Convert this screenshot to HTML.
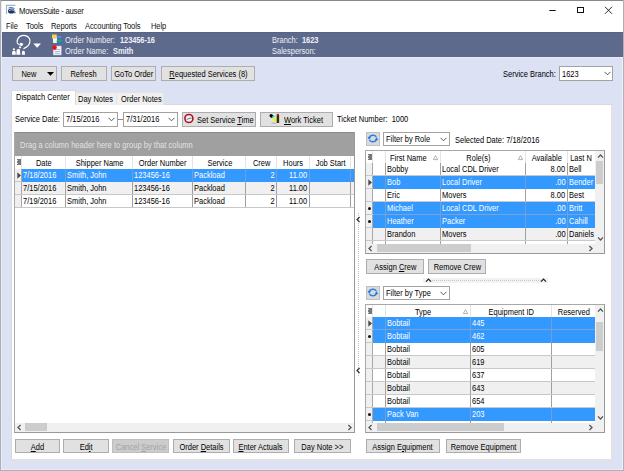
<!DOCTYPE html><html><head><meta charset='utf-8'><style>
*{margin:0;padding:0;box-sizing:border-box}
html,body{width:624px;height:471px;overflow:hidden;background:#fff}
body{position:relative;font-family:"Liberation Sans",sans-serif;font-size:8.3px;letter-spacing:0.01px;color:#000}
div{position:absolute}
.t{white-space:nowrap;line-height:0;height:0}
.t span{position:relative;top:-0.3465em;display:inline-block;line-height:0;transform:scaleX(0.9);transform-origin:0 0}
.t.c span{transform-origin:50% 0}
.t.r span{transform-origin:100% 0}
.btn span{display:inline-block;transform:scaleX(0.9);transform-origin:50% 50%}
.btn[style*="text-align:left"] span{transform-origin:0 50%}
.btn{background:#e1e1e1;border:1px solid #adadad;text-align:center;white-space:nowrap;color:#000}
.dis{background:#cccccc;border-color:#bfbfbf;color:#a3a3a3}
u{text-decoration:underline;text-underline-offset:1px}
</style></head><body><div style="left:0px;top:0px;width:624px;height:471px;background:#dde1f4"></div>
<div style="left:0px;top:0px;width:624px;height:32px;background:#fff"></div>
<div style="left:2px;top:32px;width:621px;height:25px;background:#5e6a8b"></div>
<div style="left:2px;top:32px;width:621px;height:1px;background:#56628a"></div>
<div style="left:2px;top:57px;width:621px;height:1px;background:#e9ecf8"></div>
<div style="left:1px;top:1px;width:1px;height:469px;background:#e8ecfa"></div>
<div style="left:1px;top:469px;width:622px;height:1px;background:#e8ecfa"></div>
<div style="left:622px;top:57px;width:1px;height:413px;background:#eef0fa"></div>
<div style="left:0px;top:0px;width:624px;height:1px;background:#8a8a8a"></div>
<div style="left:0px;top:0px;width:1px;height:471px;background:#b0b0b0"></div>
<div style="left:623px;top:0px;width:1px;height:471px;background:#b0b0b0"></div>
<div style="left:0px;top:470px;width:624px;height:1px;background:#b0b0b0"></div>
<div class="t" style="left:19px;top:14px;font-size:8.6px;letter-spacing:-0.27px;color:#111"><span>MoversSuite - auser</span></div>
<svg style="position:absolute;left:5px;top:4px" width="12" height="11" viewBox="0 0 12 11"><path d="M1.5 10 V1.3 H10.5" fill="none" stroke="#9fb2cc" stroke-width="1.2"/><path d="M3.5 4 Q6 2.5 9.5 4.5" fill="none" stroke="#4d6c9c" stroke-width="1"/><ellipse cx="6.3" cy="7" rx="3.3" ry="2.6" fill="#17336b"/><path d="M4 6.5 Q6.5 5 9.5 6.5" fill="none" stroke="#e8eef8" stroke-width="0.8"/><circle cx="9.8" cy="8.6" r="1" fill="#6b86b5"/></svg>
<svg style="position:absolute;left:545px;top:4px" width="72" height="14" viewBox="0 0 72 14"><path d="M4.3 6.5 H10.7" stroke="#111" stroke-width="1"/><rect x="32.5" y="3.5" width="6" height="5" fill="none" stroke="#111" stroke-width="1"/><path d="M60 2.8 L67 9.8 M67 2.8 L60 9.8" stroke="#111" stroke-width="0.9"/></svg>
<div class="t" style="left:6px;top:28.5px;font-size:8.4px;letter-spacing:-0.1px;color:#111"><span>File</span></div>
<div class="t" style="left:25.5px;top:28.5px;font-size:8.4px;letter-spacing:-0.1px;color:#111"><span>Tools</span></div>
<div class="t" style="left:51px;top:28.5px;font-size:8.4px;letter-spacing:-0.1px;color:#111"><span>Reports</span></div>
<div class="t" style="left:84.5px;top:28.5px;font-size:8.4px;letter-spacing:-0.1px;color:#111"><span>Accounting Tools</span></div>
<div class="t" style="left:150.5px;top:28.5px;font-size:8.4px;letter-spacing:-0.1px;color:#111"><span>Help</span></div>
<svg style="position:absolute;left:8px;top:32px" width="36" height="25" viewBox="0 0 36 25"><path d="M9.1 10.6 C9.1 8 10.5 5 13 3.9 C15.5 3 19.5 3.3 21.4 6.5 C22.8 9 21.5 13 19.2 14.6 C18 15.5 16.5 16.3 15.4 16.8" fill="none" stroke="#fff" stroke-width="1.25"/><path d="M9.1 10.6 C9.8 12.2 11 13 14.2 13.6" fill="none" stroke="#fff" stroke-width="1.1"/><ellipse cx="13.5" cy="12" rx="1.8" ry="1.1" transform="rotate(20 13.5 12)" fill="#fff"/><circle cx="5.9" cy="17.3" r="1.1" fill="#fff"/><path d="M4 22.8 L4.2 19.5 Q5.8 18 7.6 19.5 L7.8 22.8 Z" fill="#fff"/><circle cx="12" cy="15.3" r="1.1" fill="#fff"/><path d="M8.3 22.8 L8.6 18 Q10.2 16.3 12 17.5 L12.3 22.8 Z" fill="#fff"/><path d="M13.8 22.8 L14 19.6 Q15.4 18 16.8 19.6 L17 22.8 Z" fill="#fff"/><path d="M25.3 11.6 L33 11.6 L29.15 15.7 Z" fill="#fff"/></svg>
<svg style="position:absolute;left:51px;top:33px" width="13" height="23" viewBox="0 0 13 23"><rect x="2" y="4.5" width="4" height="5.5" fill="#f4f4f4"/><rect x="1" y="1.5" width="4.8" height="4" fill="#f0d060"/><rect x="6" y="3" width="4.5" height="2.2" fill="#5585e0"/><circle cx="8.6" cy="8.4" r="2.9" fill="#2a7acc"/><path d="M6.2 7.2 Q8.5 5.6 11 7.5 Q9 9.5 6.5 9Z" fill="#30b040"/><rect x="2.2" y="13" width="8" height="9" fill="#f4f4fa" stroke="#b8bcd0" stroke-width="0.5"/><path d="M4 16.5 H9 M4 18.5 H9 M4 20.3 H9" stroke="#8aa0d8" stroke-width="0.7"/><circle cx="3.5" cy="14.6" r="2.3" fill="#f01010"/></svg>
<div class="t" style="left:65px;top:42.8px;color:#eef0f8"><span>Order Number:</span></div>
<div class="t" style="left:119.5px;top:42.8px;color:#eef0f8;letter-spacing:-0.1px"><span><b>123456-16</b></span></div>
<div class="t" style="left:65px;top:54px;color:#eef0f8"><span>Order Name:</span></div>
<div class="t" style="left:112.5px;top:54px;color:#eef0f8;letter-spacing:-0.1px"><span><b>Smith</b></span></div>
<div class="t" style="left:272px;top:42.8px;color:#eef0f8"><span>Branch:</span></div>
<div class="t" style="left:301.5px;top:42.8px;color:#eef0f8;letter-spacing:-0.1px"><span><b>1623</b></span></div>
<div class="t" style="left:272px;top:54px;color:#eef0f8"><span>Salesperson:</span></div>
<div class="btn" style="left:12px;top:66px;width:45px;height:15px;line-height:15.6px;"><span>New&nbsp;&nbsp;&nbsp;&nbsp;&nbsp;</span></div>
<svg style="position:absolute;left:47px;top:72px" width="8" height="4" viewBox="0 0 8 4"><path d="M0 0 H7 L3.5 3.8Z" fill="#000"/></svg>
<div class="btn" style="left:61px;top:66px;width:46px;height:15px;line-height:15.6px;"><span>Refresh</span></div>
<div class="btn" style="left:111px;top:66px;width:45px;height:15px;line-height:15.6px;"><span>GoTo Order</span></div>
<div class="btn" style="left:161px;top:66px;width:94px;height:15px;line-height:15.6px;"><span><u>R</u>equested Services (8)</span></div>
<div class="t" style="left:503px;top:76.5px;"><span>Service Branch:</span></div>
<div style="left:559px;top:66px;width:54px;height:15px;background:#fff;border:1px solid #a2a2a2"></div>
<div class="t" style="left:562px;top:76.5px;"><span>1623</span></div>
<svg style="position:absolute;left:604px;top:71px" width="7" height="5" viewBox="0 0 7 5"><path d="M0.5 0.8 L3.5 3.8 L6.5 0.8" fill="none" stroke="#444" stroke-width="0.9"/></svg>
<div style="left:11px;top:104px;width:602px;height:357px;background:#fff;border:1px solid #d9d9d9;border-right:2px solid #e2e2e2;border-bottom:2px solid #e2e2e2"></div>
<div style="left:75px;top:92px;width:42px;height:13px;background:#f0f0f0;border:1px solid #e3e3e3;border-bottom:none"></div>
<div style="left:116px;top:92px;width:48px;height:13px;background:#f0f0f0;border:1px solid #e3e3e3;border-bottom:none"></div>
<div style="left:11px;top:90px;width:65px;height:15px;background:#fff;border:1px solid #d9d9d9;border-bottom:none"></div>
<div class="t" style="left:16px;top:99.8px;"><span>Dispatch Center</span></div>
<div class="t" style="left:78px;top:101.8px;"><span>Day Notes</span></div>
<div class="t" style="left:121px;top:101.8px;"><span>Order Notes</span></div>
<div class="t" style="left:15px;top:122px;"><span>Service Date:</span></div>
<div style="left:63px;top:112px;width:55px;height:15px;background:#fff;border:1px solid #a2a2a2"></div>
<div class="t" style="left:65.5px;top:122.3px;"><span>7/15/2016</span></div>
<svg style="position:absolute;left:108px;top:117px" width="7" height="5" viewBox="0 0 7 5"><path d="M0.5 0.8 L3.5 3.8 L6.5 0.8" fill="none" stroke="#444" stroke-width="0.9"/></svg>
<div style="left:118px;top:119px;width:5px;height:1px;background:#8a8a8a"></div>
<div style="left:123px;top:112px;width:55px;height:15px;background:#fff;border:1px solid #a2a2a2"></div>
<div class="t" style="left:125.5px;top:122.3px;"><span>7/31/2016</span></div>
<svg style="position:absolute;left:168px;top:117px" width="7" height="5" viewBox="0 0 7 5"><path d="M0.5 0.8 L3.5 3.8 L6.5 0.8" fill="none" stroke="#444" stroke-width="0.9"/></svg>
<div class="btn" style="left:182px;top:112px;width:74px;height:15px;line-height:15.6px;text-align:left;padding-left:13.5px"><span>Set Service <u>T</u>ime</span></div>
<svg style="position:absolute;left:182px;top:111px" width="16" height="16" viewBox="0 0 16 16"><circle cx="6.9" cy="7.5" r="4" fill="#f2efff" stroke="#b0121c" stroke-width="1.6"/><path d="M4.6 8.6 L7 7.4 L9.6 7" stroke="#555" stroke-width="0.8" fill="none"/></svg>
<div class="btn" style="left:260px;top:112px;width:73px;height:15px;line-height:15.6px;text-align:left;padding-left:23px"><span><u>W</u>ork Ticket</span></div>
<svg style="position:absolute;left:266px;top:111px" width="18" height="16" viewBox="0 0 18 16"><ellipse cx="8" cy="12.2" rx="3" ry="0.7" fill="#b8b8b8"/><ellipse cx="5.4" cy="4.9" rx="2" ry="1.7" transform="rotate(35 5.4 4.9)" fill="#000"/><path d="M6 5.2 L7.9 4 L9 6 L7.2 7.4Z" fill="#10d8e8"/><ellipse cx="8.7" cy="8.2" rx="2" ry="2.5" transform="rotate(-35 8.7 8.2)" fill="#f0ee40"/><rect x="10.7" y="4" width="2.4" height="8" fill="#2e3008"/><rect x="10.8" y="2.8" width="2.2" height="1.5" fill="#e01818"/></svg>
<div class="t" style="left:337px;top:122px;"><span>Ticket Number:&nbsp; 1000</span></div>
<div style="left:14px;top:132px;width:341px;height:301px;background:#fff;border:1px solid #a8a8a8;border-right-color:#999;border-bottom-color:#999"></div>
<div style="left:15px;top:156px;width:339px;height:13px;background:#fff"></div>
<div style="left:65px;top:156px;width:1px;height:13px;background:#e4e4e4"></div>
<div style="left:132px;top:156px;width:1px;height:13px;background:#e4e4e4"></div>
<div style="left:192px;top:156px;width:1px;height:13px;background:#e4e4e4"></div>
<div style="left:245px;top:156px;width:1px;height:13px;background:#e4e4e4"></div>
<div style="left:276px;top:156px;width:1px;height:13px;background:#e4e4e4"></div>
<div style="left:309px;top:156px;width:1px;height:13px;background:#e4e4e4"></div>
<div style="left:350px;top:156px;width:1px;height:13px;background:#e4e4e4"></div>
<div style="left:21px;top:156px;width:1px;height:13px;background:#e4e4e4"></div>
<div style="left:16.5px;top:159px;width:4px;height:6px;background:#777"></div>
<div style="left:16.5px;top:160px;width:1px;height:1px;background:#ddd"></div>
<div style="left:16.5px;top:163px;width:1px;height:1px;background:#ddd"></div>
<div class="t c" style="left:22px;width:44px;top:165.4px;text-align:center"><span>Date</span></div>
<div class="t c" style="left:66px;width:67px;top:165.4px;text-align:center"><span>Shipper Name</span></div>
<div class="t c" style="left:133px;width:60px;top:165.4px;text-align:center"><span>Order Number</span></div>
<div class="t c" style="left:193px;width:53px;top:165.4px;text-align:center"><span>Service</span></div>
<div class="t c" style="left:246px;width:31px;top:165.4px;text-align:center"><span>Crew</span></div>
<div class="t c" style="left:277px;width:33px;top:165.4px;text-align:center"><span>Hours</span></div>
<div class="t c" style="left:310px;width:41px;top:165.4px;text-align:center"><span>Job Start</span></div>
<div style="left:15px;top:169px;width:7px;height:13px;background:#f0f0f0"></div>
<div style="left:22px;top:169px;width:332px;height:13px;background:#3399ff"></div>
<div style="left:65px;top:169px;width:1px;height:13px;background:#6f9fd6"></div>
<div style="left:132px;top:169px;width:1px;height:13px;background:#6f9fd6"></div>
<div style="left:192px;top:169px;width:1px;height:13px;background:#6f9fd6"></div>
<div style="left:245px;top:169px;width:1px;height:13px;background:#6f9fd6"></div>
<div style="left:276px;top:169px;width:1px;height:13px;background:#6f9fd6"></div>
<div style="left:309px;top:169px;width:1px;height:13px;background:#6f9fd6"></div>
<div style="left:350px;top:169px;width:1px;height:13px;background:#6f9fd6"></div>
<div style="left:21px;top:169px;width:1px;height:13px;background:#a8a8a8"></div>
<div style="left:15px;top:181px;width:7px;height:1px;background:#c8c8c8"></div>
<div class="t" style="left:23.4px;top:177.8px;color:#fff"><span>7/18/2016</span></div>
<div class="t" style="left:67.4px;top:177.8px;color:#fff"><span>Smith, John</span></div>
<div class="t" style="left:134.4px;top:177.8px;color:#fff"><span>123456-16</span></div>
<div class="t" style="left:194.4px;top:177.8px;color:#fff"><span>Packload</span></div>
<div class="t r" style="left:246px;width:28.5px;top:177.8px;text-align:right;color:#fff"><span>2</span></div>
<div class="t r" style="left:277px;width:30.5px;top:177.8px;text-align:right;color:#fff"><span>11.00</span></div>
<svg style="position:absolute;left:16.5px;top:172px" width="5" height="7" viewBox="0 0 5 7"><path d="M0.3 0.3 L4 3.5 L0.3 6.7Z" fill="#4a4a4a"/></svg>
<div style="left:15px;top:182px;width:7px;height:13px;background:#f0f0f0"></div>
<div style="left:22px;top:182px;width:332px;height:13px;background:#f0f0f0"></div>
<div style="left:65px;top:182px;width:1px;height:13px;background:#a0a0a0"></div>
<div style="left:132px;top:182px;width:1px;height:13px;background:#a0a0a0"></div>
<div style="left:192px;top:182px;width:1px;height:13px;background:#a0a0a0"></div>
<div style="left:245px;top:182px;width:1px;height:13px;background:#a0a0a0"></div>
<div style="left:276px;top:182px;width:1px;height:13px;background:#a0a0a0"></div>
<div style="left:309px;top:182px;width:1px;height:13px;background:#a0a0a0"></div>
<div style="left:350px;top:182px;width:1px;height:13px;background:#a0a0a0"></div>
<div style="left:21px;top:182px;width:1px;height:13px;background:#a8a8a8"></div>
<div style="left:15px;top:194px;width:7px;height:1px;background:#c8c8c8"></div>
<div style="left:22px;top:194px;width:332px;height:1px;background:#c8c8c8"></div>
<div class="t" style="left:23.4px;top:190.8px;color:#000"><span>7/15/2016</span></div>
<div class="t" style="left:67.4px;top:190.8px;color:#000"><span>Smith, John</span></div>
<div class="t" style="left:134.4px;top:190.8px;color:#000"><span>123456-16</span></div>
<div class="t" style="left:194.4px;top:190.8px;color:#000"><span>Packload</span></div>
<div class="t r" style="left:246px;width:28.5px;top:190.8px;text-align:right;color:#000"><span>2</span></div>
<div class="t r" style="left:277px;width:30.5px;top:190.8px;text-align:right;color:#000"><span>11.00</span></div>
<div style="left:15px;top:195px;width:7px;height:13px;background:#f0f0f0"></div>
<div style="left:22px;top:195px;width:332px;height:13px;background:#fff"></div>
<div style="left:65px;top:195px;width:1px;height:13px;background:#a0a0a0"></div>
<div style="left:132px;top:195px;width:1px;height:13px;background:#a0a0a0"></div>
<div style="left:192px;top:195px;width:1px;height:13px;background:#a0a0a0"></div>
<div style="left:245px;top:195px;width:1px;height:13px;background:#a0a0a0"></div>
<div style="left:276px;top:195px;width:1px;height:13px;background:#a0a0a0"></div>
<div style="left:309px;top:195px;width:1px;height:13px;background:#a0a0a0"></div>
<div style="left:350px;top:195px;width:1px;height:13px;background:#a0a0a0"></div>
<div style="left:21px;top:195px;width:1px;height:13px;background:#a8a8a8"></div>
<div style="left:15px;top:207px;width:7px;height:1px;background:#c8c8c8"></div>
<div style="left:22px;top:207px;width:332px;height:1px;background:#c8c8c8"></div>
<div class="t" style="left:23.4px;top:203.8px;color:#000"><span>7/19/2016</span></div>
<div class="t" style="left:67.4px;top:203.8px;color:#000"><span>Smith, John</span></div>
<div class="t" style="left:134.4px;top:203.8px;color:#000"><span>123456-16</span></div>
<div class="t" style="left:194.4px;top:203.8px;color:#000"><span>Packload</span></div>
<div class="t r" style="left:246px;width:28.5px;top:203.8px;text-align:right;color:#000"><span>2</span></div>
<div class="t r" style="left:277px;width:30.5px;top:203.8px;text-align:right;color:#000"><span>11.00</span></div>
<div style="left:15px;top:423px;width:339px;height:9px;background:#f0f0f0"></div>
<div style="left:25px;top:423px;width:22px;height:8px;background:#cdcdcd"></div>
<svg style="position:absolute;left:16px;top:424px" width="7" height="7" viewBox="0 0 7 7"><path d="M4.6 1 L2 3.5 L4.6 6" fill="none" stroke="#555" stroke-width="1.3"/></svg>
<svg style="position:absolute;left:346px;top:424px" width="7" height="7" viewBox="0 0 7 7"><path d="M2.4 1 L5 3.5 L2.4 6" fill="none" stroke="#555" stroke-width="1.3"/></svg>
<div style="left:15px;top:132px;width:339px;height:24px;background:#a0a0a0;border-top:1px solid #8c8c8c"></div>
<div class="t" style="left:20px;top:148px;color:#e2e2e2;letter-spacing:0.04px"><span>Drag a column header here to group by that column</span></div>
<div style="left:358px;top:213px;width:1px;height:163px;background:repeating-linear-gradient(#c0c0c0 0 1px,#fff 1px 2px)"></div>
<svg style="position:absolute;left:355.2px;top:215.8px" width="7" height="7" viewBox="0 0 7 7"><path d="M4.6 1 L2 3.5 L4.6 6" fill="none" stroke="#333" stroke-width="1.2"/></svg>
<svg style="position:absolute;left:355.2px;top:367.2px" width="7" height="7" viewBox="0 0 7 7"><path d="M4.6 1 L2 3.5 L4.6 6" fill="none" stroke="#333" stroke-width="1.2"/></svg>
<div class="btn" style="left:366px;top:132px;width:14px;height:14px;line-height:14.6px;background:#dadada;border-color:#c0c0c0"><span></span></div>
<svg style="position:absolute;left:367px;top:133px" width="12" height="12" viewBox="0 0 12 12"><path d="M9.28 3.85 A3.9 3.3 0 0 0 2.24 4.37" fill="none" stroke="#2a7de8" stroke-width="1.5"/><path d="M2.52 7.15 A3.9 3.3 0 0 0 9.56 6.63" fill="none" stroke="#2a7de8" stroke-width="1.5"/><path d="M0.5 4.1 L4 4.1 L2.25 7Z" fill="#2a7de8"/><path d="M7.8 6.9 L11.3 6.9 L9.55 4Z" fill="#2a7de8"/></svg>
<div style="left:383px;top:132px;width:67px;height:14px;background:#fff;border:1px solid #a2a2a2"></div>
<div class="t" style="left:385.5px;top:142.3px;"><span>Filter by Role</span></div>
<svg style="position:absolute;left:440px;top:137px" width="7" height="5" viewBox="0 0 7 5"><path d="M0.5 0.8 L3.5 3.8 L6.5 0.8" fill="none" stroke="#444" stroke-width="0.9"/></svg>
<div class="t" style="left:455px;top:143px;"><span>Selected Date: 7/18/2016</span></div>
<div style="left:365px;top:150px;width:240px;height:104px;background:#fff;border:1px solid #a8a8a8;border-right-color:#999;border-bottom-color:#999"></div>
<div style="left:366px;top:151px;width:229px;height:12px;background:#fff"></div>
<div style="left:385px;top:151px;width:1px;height:12px;background:#e4e4e4"></div>
<div style="left:440px;top:151px;width:1px;height:12px;background:#e4e4e4"></div>
<div style="left:525px;top:151px;width:1px;height:12px;background:#e4e4e4"></div>
<div style="left:567px;top:151px;width:1px;height:12px;background:#e4e4e4"></div>
<div style="left:372px;top:151px;width:1px;height:12px;background:#e4e4e4"></div>
<div style="left:367.5px;top:154px;width:4px;height:6px;background:#777"></div>
<div style="left:367.5px;top:155px;width:1px;height:1px;background:#ddd"></div>
<div style="left:367.5px;top:158px;width:1px;height:1px;background:#ddd"></div>
<div class="t c" style="left:386px;width:44px;top:161.0px;text-align:center"><span>First Name</span></div>
<svg style="position:absolute;left:432px;top:154px" width="7" height="7" viewBox="0 0 7 7"><path d="M3.5 1.6 L5.7 5.6 L1.3 5.6Z" fill="none" stroke="#a8a8a8" stroke-width="0.9"/></svg>
<div class="t c" style="left:441px;width:74px;top:161.0px;text-align:center"><span>Role(s)</span></div>
<svg style="position:absolute;left:517px;top:154px" width="7" height="7" viewBox="0 0 7 7"><path d="M3.5 1.6 L5.7 5.6 L1.3 5.6Z" fill="none" stroke="#a8a8a8" stroke-width="0.9"/></svg>
<div class="t c" style="left:526px;width:42px;top:161.0px;text-align:center"><span>Available</span></div>
<div class="t c" style="left:568px;width:27px;top:161.0px;text-align:center"><span>Last N</span></div>
<div style="left:366px;top:163px;width:7px;height:13px;background:#f0f0f0"></div>
<div style="left:373px;top:163px;width:222px;height:13px;background:#fff"></div>
<div style="left:385px;top:163px;width:1px;height:13px;background:#a0a0a0"></div>
<div style="left:440px;top:163px;width:1px;height:13px;background:#a0a0a0"></div>
<div style="left:525px;top:163px;width:1px;height:13px;background:#a0a0a0"></div>
<div style="left:567px;top:163px;width:1px;height:13px;background:#a0a0a0"></div>
<div style="left:372px;top:163px;width:1px;height:13px;background:#a8a8a8"></div>
<div style="left:366px;top:175px;width:7px;height:1px;background:#c8c8c8"></div>
<div style="left:373px;top:175px;width:222px;height:1px;background:#c8c8c8"></div>
<div class="t" style="left:387.4px;top:171.8px;color:#000"><span>Bobby</span></div>
<div class="t" style="left:442.4px;top:171.8px;color:#000"><span>Local CDL Driver</span></div>
<div class="t r" style="left:526px;width:39.5px;top:171.8px;text-align:right;color:#000"><span>8.00</span></div>
<div class="t" style="left:569.4px;top:171.8px;color:#000"><span>Bell</span></div>
<div style="left:366px;top:176px;width:7px;height:13px;background:#f0f0f0"></div>
<div style="left:373px;top:176px;width:222px;height:13px;background:#3399ff"></div>
<div style="left:385px;top:176px;width:1px;height:13px;background:#6f9fd6"></div>
<div style="left:440px;top:176px;width:1px;height:13px;background:#6f9fd6"></div>
<div style="left:525px;top:176px;width:1px;height:13px;background:#6f9fd6"></div>
<div style="left:567px;top:176px;width:1px;height:13px;background:#6f9fd6"></div>
<div style="left:372px;top:176px;width:1px;height:13px;background:#a8a8a8"></div>
<div style="left:366px;top:188px;width:7px;height:1px;background:#c8c8c8"></div>
<div class="t" style="left:387.4px;top:184.8px;color:#fff"><span>Bob</span></div>
<div class="t" style="left:442.4px;top:184.8px;color:#fff"><span>Local Driver</span></div>
<div class="t r" style="left:526px;width:39.5px;top:184.8px;text-align:right;color:#fff"><span>.00</span></div>
<div class="t" style="left:569.4px;top:184.8px;color:#fff"><span>Bender</span></div>
<svg style="position:absolute;left:367.5px;top:179px" width="5" height="7" viewBox="0 0 5 7"><path d="M0.3 0.3 L4 3.5 L0.3 6.7Z" fill="#4a4a4a"/></svg>
<div style="left:366px;top:189px;width:7px;height:13px;background:#f0f0f0"></div>
<div style="left:373px;top:189px;width:222px;height:13px;background:#fff"></div>
<div style="left:385px;top:189px;width:1px;height:13px;background:#a0a0a0"></div>
<div style="left:440px;top:189px;width:1px;height:13px;background:#a0a0a0"></div>
<div style="left:525px;top:189px;width:1px;height:13px;background:#a0a0a0"></div>
<div style="left:567px;top:189px;width:1px;height:13px;background:#a0a0a0"></div>
<div style="left:372px;top:189px;width:1px;height:13px;background:#a8a8a8"></div>
<div style="left:366px;top:201px;width:7px;height:1px;background:#c8c8c8"></div>
<div style="left:373px;top:201px;width:222px;height:1px;background:#c8c8c8"></div>
<div class="t" style="left:387.4px;top:197.8px;color:#000"><span>Eric</span></div>
<div class="t" style="left:442.4px;top:197.8px;color:#000"><span>Movers</span></div>
<div class="t r" style="left:526px;width:39.5px;top:197.8px;text-align:right;color:#000"><span>8.00</span></div>
<div class="t" style="left:569.4px;top:197.8px;color:#000"><span>Best</span></div>
<div style="left:366px;top:202px;width:7px;height:13px;background:#f0f0f0"></div>
<div style="left:373px;top:202px;width:222px;height:13px;background:#3399ff"></div>
<div style="left:385px;top:202px;width:1px;height:13px;background:#6f9fd6"></div>
<div style="left:440px;top:202px;width:1px;height:13px;background:#6f9fd6"></div>
<div style="left:525px;top:202px;width:1px;height:13px;background:#6f9fd6"></div>
<div style="left:567px;top:202px;width:1px;height:13px;background:#6f9fd6"></div>
<div style="left:372px;top:202px;width:1px;height:13px;background:#a8a8a8"></div>
<div style="left:366px;top:214px;width:7px;height:1px;background:#c8c8c8"></div>
<div style="left:373px;top:214px;width:222px;height:1px;background:#7aa3d0"></div>
<div class="t" style="left:387.4px;top:210.8px;color:#fff"><span>Michael</span></div>
<div class="t" style="left:442.4px;top:210.8px;color:#fff"><span>Local CDL Driver</span></div>
<div class="t r" style="left:526px;width:39.5px;top:210.8px;text-align:right;color:#fff"><span>.00</span></div>
<div class="t" style="left:569.4px;top:210.8px;color:#fff"><span>Britt</span></div>
<div style="left:367.6px;top:206.6px;width:3px;height:3px;background:#111;border-radius:50%"></div>
<div style="left:366px;top:215px;width:7px;height:13px;background:#f0f0f0"></div>
<div style="left:373px;top:215px;width:222px;height:13px;background:#3399ff"></div>
<div style="left:385px;top:215px;width:1px;height:13px;background:#6f9fd6"></div>
<div style="left:440px;top:215px;width:1px;height:13px;background:#6f9fd6"></div>
<div style="left:525px;top:215px;width:1px;height:13px;background:#6f9fd6"></div>
<div style="left:567px;top:215px;width:1px;height:13px;background:#6f9fd6"></div>
<div style="left:372px;top:215px;width:1px;height:13px;background:#a8a8a8"></div>
<div style="left:366px;top:227px;width:7px;height:1px;background:#c8c8c8"></div>
<div class="t" style="left:387.4px;top:223.8px;color:#fff"><span>Heather</span></div>
<div class="t" style="left:442.4px;top:223.8px;color:#fff"><span>Packer</span></div>
<div class="t r" style="left:526px;width:39.5px;top:223.8px;text-align:right;color:#fff"><span>.00</span></div>
<div class="t" style="left:569.4px;top:223.8px;color:#fff"><span>Cahill</span></div>
<div style="left:367.6px;top:219.6px;width:3px;height:3px;background:#111;border-radius:50%"></div>
<div style="left:366px;top:228px;width:7px;height:13px;background:#f0f0f0"></div>
<div style="left:373px;top:228px;width:222px;height:13px;background:#f0f0f0"></div>
<div style="left:385px;top:228px;width:1px;height:13px;background:#a0a0a0"></div>
<div style="left:440px;top:228px;width:1px;height:13px;background:#a0a0a0"></div>
<div style="left:525px;top:228px;width:1px;height:13px;background:#a0a0a0"></div>
<div style="left:567px;top:228px;width:1px;height:13px;background:#a0a0a0"></div>
<div style="left:372px;top:228px;width:1px;height:13px;background:#a8a8a8"></div>
<div style="left:366px;top:240px;width:7px;height:1px;background:#c8c8c8"></div>
<div style="left:373px;top:240px;width:222px;height:1px;background:#c8c8c8"></div>
<div class="t" style="left:387.4px;top:236.8px;color:#000"><span>Brandon</span></div>
<div class="t" style="left:442.4px;top:236.8px;color:#000"><span>Movers</span></div>
<div class="t r" style="left:526px;width:39.5px;top:236.8px;text-align:right;color:#000"><span>.00</span></div>
<div class="t" style="left:569.4px;top:236.8px;color:#000"><span>Daniels</span></div>
<div style="left:366px;top:241px;width:7px;height:3px;background:#f0f0f0"></div>
<div style="left:373px;top:241px;width:222px;height:3px;background:#fff"></div>
<div style="left:385px;top:241px;width:1px;height:3px;background:#a0a0a0"></div>
<div style="left:440px;top:241px;width:1px;height:3px;background:#a0a0a0"></div>
<div style="left:525px;top:241px;width:1px;height:3px;background:#a0a0a0"></div>
<div style="left:567px;top:241px;width:1px;height:3px;background:#a0a0a0"></div>
<div style="left:372px;top:241px;width:1px;height:3px;background:#a8a8a8"></div>
<div style="left:366px;top:244px;width:238px;height:9px;background:#f0f0f0"></div>
<div style="left:377px;top:244px;width:94px;height:8px;background:#cdcdcd"></div>
<svg style="position:absolute;left:367px;top:245px" width="7" height="7" viewBox="0 0 7 7"><path d="M4.6 1 L2 3.5 L4.6 6" fill="none" stroke="#555" stroke-width="1.3"/></svg>
<svg style="position:absolute;left:587px;top:245px" width="7" height="7" viewBox="0 0 7 7"><path d="M2.4 1 L5 3.5 L2.4 6" fill="none" stroke="#555" stroke-width="1.3"/></svg>
<div style="left:595px;top:151px;width:9px;height:93px;background:#f0f0f0"></div>
<div style="left:596px;top:161px;width:7px;height:23px;background:#cdcdcd"></div>
<svg style="position:absolute;left:596.5px;top:153px" width="7" height="7" viewBox="0 0 7 7"><path d="M1 4.6 L3.5 2 L6 4.6" fill="none" stroke="#555" stroke-width="1.3"/></svg>
<svg style="position:absolute;left:596.5px;top:235px" width="7" height="7" viewBox="0 0 7 7"><path d="M1 2.4 L3.5 5 L6 2.4" fill="none" stroke="#555" stroke-width="1.3"/></svg>
<div class="btn" style="left:366px;top:259px;width:58px;height:15px;line-height:15.6px;"><span>Assign <u>C</u>rew</span></div>
<div class="btn" style="left:428px;top:259px;width:58px;height:15px;line-height:15.6px;"><span>Remove Crew</span></div>
<div style="left:423px;top:278px;width:125px;height:5px;background:#f2f2f2"></div>
<div style="left:432px;top:280px;width:110px;height:1px;background:repeating-linear-gradient(90deg,#c8c8c8 0 1px,#f2f2f2 1px 2px)"></div>
<svg style="position:absolute;left:425.1px;top:276.7px" width="7" height="7" viewBox="0 0 7 7"><path d="M1 4.6 L3.5 2 L6 4.6" fill="none" stroke="#222" stroke-width="1.2"/></svg>
<svg style="position:absolute;left:539.5px;top:276.7px" width="7" height="7" viewBox="0 0 7 7"><path d="M1 4.6 L3.5 2 L6 4.6" fill="none" stroke="#222" stroke-width="1.2"/></svg>
<div class="btn" style="left:366px;top:286px;width:14px;height:14px;line-height:14.6px;background:#dadada;border-color:#c0c0c0"><span></span></div>
<svg style="position:absolute;left:367px;top:287px" width="12" height="12" viewBox="0 0 12 12"><path d="M9.28 3.85 A3.9 3.3 0 0 0 2.24 4.37" fill="none" stroke="#2a7de8" stroke-width="1.5"/><path d="M2.52 7.15 A3.9 3.3 0 0 0 9.56 6.63" fill="none" stroke="#2a7de8" stroke-width="1.5"/><path d="M0.5 4.1 L4 4.1 L2.25 7Z" fill="#2a7de8"/><path d="M7.8 6.9 L11.3 6.9 L9.55 4Z" fill="#2a7de8"/></svg>
<div style="left:383px;top:286px;width:67px;height:14px;background:#fff;border:1px solid #a2a2a2"></div>
<div class="t" style="left:385.5px;top:296.3px;"><span>Filter by Type</span></div>
<svg style="position:absolute;left:440px;top:291px" width="7" height="5" viewBox="0 0 7 5"><path d="M0.5 0.8 L3.5 3.8 L6.5 0.8" fill="none" stroke="#444" stroke-width="0.9"/></svg>
<div style="left:365px;top:304px;width:240px;height:129px;background:#fff;border:1px solid #a8a8a8;border-right-color:#999;border-bottom-color:#999"></div>
<div style="left:366px;top:305px;width:229px;height:12px;background:#fff"></div>
<div style="left:385px;top:305px;width:1px;height:12px;background:#e4e4e4"></div>
<div style="left:470px;top:305px;width:1px;height:12px;background:#e4e4e4"></div>
<div style="left:551px;top:305px;width:1px;height:12px;background:#e4e4e4"></div>
<div style="left:372px;top:305px;width:1px;height:12px;background:#e4e4e4"></div>
<div style="left:367.5px;top:308px;width:4px;height:6px;background:#777"></div>
<div style="left:367.5px;top:309px;width:1px;height:1px;background:#ddd"></div>
<div style="left:367.5px;top:312px;width:1px;height:1px;background:#ddd"></div>
<div class="t c" style="left:386px;width:74px;top:315.0px;text-align:center"><span>Type</span></div>
<svg style="position:absolute;left:462px;top:308px" width="7" height="7" viewBox="0 0 7 7"><path d="M3.5 1.6 L5.7 5.6 L1.3 5.6Z" fill="none" stroke="#a8a8a8" stroke-width="0.9"/></svg>
<div class="t c" style="left:471px;width:81px;top:315.0px;text-align:center"><span>Equipment ID</span></div>
<div class="t c" style="left:552px;width:43px;top:315.0px;text-align:center"><span>Reserved</span></div>
<div style="left:366px;top:317px;width:7px;height:13px;background:#f0f0f0"></div>
<div style="left:373px;top:317px;width:222px;height:13px;background:#3399ff"></div>
<div style="left:385px;top:317px;width:1px;height:13px;background:#6f9fd6"></div>
<div style="left:470px;top:317px;width:1px;height:13px;background:#6f9fd6"></div>
<div style="left:551px;top:317px;width:1px;height:13px;background:#6f9fd6"></div>
<div style="left:372px;top:317px;width:1px;height:13px;background:#a8a8a8"></div>
<div style="left:366px;top:329px;width:7px;height:1px;background:#c8c8c8"></div>
<div style="left:373px;top:329px;width:222px;height:1px;background:#7aa3d0"></div>
<div class="t" style="left:387.4px;top:325.8px;color:#fff"><span>Bobtail</span></div>
<div class="t" style="left:472.4px;top:325.8px;color:#fff"><span>445</span></div>
<svg style="position:absolute;left:367.5px;top:320px" width="5" height="7" viewBox="0 0 5 7"><path d="M0.3 0.3 L4 3.5 L0.3 6.7Z" fill="#4a4a4a"/></svg>
<div style="left:366px;top:330px;width:7px;height:13px;background:#f0f0f0"></div>
<div style="left:373px;top:330px;width:222px;height:13px;background:#3399ff"></div>
<div style="left:385px;top:330px;width:1px;height:13px;background:#6f9fd6"></div>
<div style="left:470px;top:330px;width:1px;height:13px;background:#6f9fd6"></div>
<div style="left:551px;top:330px;width:1px;height:13px;background:#6f9fd6"></div>
<div style="left:372px;top:330px;width:1px;height:13px;background:#a8a8a8"></div>
<div style="left:366px;top:342px;width:7px;height:1px;background:#c8c8c8"></div>
<div class="t" style="left:387.4px;top:338.8px;color:#fff"><span>Bobtail</span></div>
<div class="t" style="left:472.4px;top:338.8px;color:#fff"><span>462</span></div>
<div style="left:367.6px;top:334.6px;width:3px;height:3px;background:#111;border-radius:50%"></div>
<div style="left:366px;top:343px;width:7px;height:13px;background:#f0f0f0"></div>
<div style="left:373px;top:343px;width:222px;height:13px;background:#fff"></div>
<div style="left:385px;top:343px;width:1px;height:13px;background:#a0a0a0"></div>
<div style="left:470px;top:343px;width:1px;height:13px;background:#a0a0a0"></div>
<div style="left:551px;top:343px;width:1px;height:13px;background:#a0a0a0"></div>
<div style="left:372px;top:343px;width:1px;height:13px;background:#a8a8a8"></div>
<div style="left:366px;top:355px;width:7px;height:1px;background:#c8c8c8"></div>
<div style="left:373px;top:355px;width:222px;height:1px;background:#c8c8c8"></div>
<div class="t" style="left:387.4px;top:351.8px;color:#000"><span>Bobtail</span></div>
<div class="t" style="left:472.4px;top:351.8px;color:#000"><span>605</span></div>
<div style="left:366px;top:356px;width:7px;height:13px;background:#f0f0f0"></div>
<div style="left:373px;top:356px;width:222px;height:13px;background:#f0f0f0"></div>
<div style="left:385px;top:356px;width:1px;height:13px;background:#a0a0a0"></div>
<div style="left:470px;top:356px;width:1px;height:13px;background:#a0a0a0"></div>
<div style="left:551px;top:356px;width:1px;height:13px;background:#a0a0a0"></div>
<div style="left:372px;top:356px;width:1px;height:13px;background:#a8a8a8"></div>
<div style="left:366px;top:368px;width:7px;height:1px;background:#c8c8c8"></div>
<div style="left:373px;top:368px;width:222px;height:1px;background:#c8c8c8"></div>
<div class="t" style="left:387.4px;top:364.8px;color:#000"><span>Bobtail</span></div>
<div class="t" style="left:472.4px;top:364.8px;color:#000"><span>619</span></div>
<div style="left:366px;top:369px;width:7px;height:13px;background:#f0f0f0"></div>
<div style="left:373px;top:369px;width:222px;height:13px;background:#fff"></div>
<div style="left:385px;top:369px;width:1px;height:13px;background:#a0a0a0"></div>
<div style="left:470px;top:369px;width:1px;height:13px;background:#a0a0a0"></div>
<div style="left:551px;top:369px;width:1px;height:13px;background:#a0a0a0"></div>
<div style="left:372px;top:369px;width:1px;height:13px;background:#a8a8a8"></div>
<div style="left:366px;top:381px;width:7px;height:1px;background:#c8c8c8"></div>
<div style="left:373px;top:381px;width:222px;height:1px;background:#c8c8c8"></div>
<div class="t" style="left:387.4px;top:377.8px;color:#000"><span>Bobtail</span></div>
<div class="t" style="left:472.4px;top:377.8px;color:#000"><span>637</span></div>
<div style="left:366px;top:382px;width:7px;height:13px;background:#f0f0f0"></div>
<div style="left:373px;top:382px;width:222px;height:13px;background:#f0f0f0"></div>
<div style="left:385px;top:382px;width:1px;height:13px;background:#a0a0a0"></div>
<div style="left:470px;top:382px;width:1px;height:13px;background:#a0a0a0"></div>
<div style="left:551px;top:382px;width:1px;height:13px;background:#a0a0a0"></div>
<div style="left:372px;top:382px;width:1px;height:13px;background:#a8a8a8"></div>
<div style="left:366px;top:394px;width:7px;height:1px;background:#c8c8c8"></div>
<div style="left:373px;top:394px;width:222px;height:1px;background:#c8c8c8"></div>
<div class="t" style="left:387.4px;top:390.8px;color:#000"><span>Bobtail</span></div>
<div class="t" style="left:472.4px;top:390.8px;color:#000"><span>643</span></div>
<div style="left:366px;top:395px;width:7px;height:13px;background:#f0f0f0"></div>
<div style="left:373px;top:395px;width:222px;height:13px;background:#fff"></div>
<div style="left:385px;top:395px;width:1px;height:13px;background:#a0a0a0"></div>
<div style="left:470px;top:395px;width:1px;height:13px;background:#a0a0a0"></div>
<div style="left:551px;top:395px;width:1px;height:13px;background:#a0a0a0"></div>
<div style="left:372px;top:395px;width:1px;height:13px;background:#a8a8a8"></div>
<div style="left:366px;top:407px;width:7px;height:1px;background:#c8c8c8"></div>
<div style="left:373px;top:407px;width:222px;height:1px;background:#c8c8c8"></div>
<div class="t" style="left:387.4px;top:403.8px;color:#000"><span>Bobtail</span></div>
<div class="t" style="left:472.4px;top:403.8px;color:#000"><span>654</span></div>
<div style="left:366px;top:408px;width:7px;height:13px;background:#f0f0f0"></div>
<div style="left:373px;top:408px;width:222px;height:13px;background:#3399ff"></div>
<div style="left:385px;top:408px;width:1px;height:13px;background:#6f9fd6"></div>
<div style="left:470px;top:408px;width:1px;height:13px;background:#6f9fd6"></div>
<div style="left:551px;top:408px;width:1px;height:13px;background:#6f9fd6"></div>
<div style="left:372px;top:408px;width:1px;height:13px;background:#a8a8a8"></div>
<div style="left:366px;top:420px;width:7px;height:1px;background:#c8c8c8"></div>
<div class="t" style="left:387.4px;top:416.8px;color:#fff"><span>Pack Van</span></div>
<div class="t" style="left:472.4px;top:416.8px;color:#fff"><span>203</span></div>
<div style="left:367.6px;top:412.6px;width:3px;height:3px;background:#111;border-radius:50%"></div>
<div style="left:366px;top:421px;width:7px;height:2px;background:#f0f0f0"></div>
<div style="left:373px;top:421px;width:222px;height:2px;background:#fff"></div>
<div style="left:385px;top:421px;width:1px;height:2px;background:#a0a0a0"></div>
<div style="left:470px;top:421px;width:1px;height:2px;background:#a0a0a0"></div>
<div style="left:551px;top:421px;width:1px;height:2px;background:#a0a0a0"></div>
<div style="left:372px;top:421px;width:1px;height:2px;background:#a8a8a8"></div>
<div style="left:366px;top:423px;width:238px;height:9px;background:#f0f0f0"></div>
<div style="left:377px;top:423px;width:127px;height:8px;background:#cdcdcd"></div>
<svg style="position:absolute;left:367px;top:424px" width="7" height="7" viewBox="0 0 7 7"><path d="M4.6 1 L2 3.5 L4.6 6" fill="none" stroke="#555" stroke-width="1.3"/></svg>
<svg style="position:absolute;left:587px;top:424px" width="7" height="7" viewBox="0 0 7 7"><path d="M2.4 1 L5 3.5 L2.4 6" fill="none" stroke="#555" stroke-width="1.3"/></svg>
<div style="left:595px;top:305px;width:9px;height:118px;background:#f0f0f0"></div>
<div style="left:596px;top:322px;width:7px;height:29px;background:#cdcdcd"></div>
<svg style="position:absolute;left:596.5px;top:307px" width="7" height="7" viewBox="0 0 7 7"><path d="M1 4.6 L3.5 2 L6 4.6" fill="none" stroke="#555" stroke-width="1.3"/></svg>
<svg style="position:absolute;left:596.5px;top:414px" width="7" height="7" viewBox="0 0 7 7"><path d="M1 2.4 L3.5 5 L6 2.4" fill="none" stroke="#555" stroke-width="1.3"/></svg>
<div class="btn" style="left:15px;top:439px;width:45px;height:14px;line-height:14.6px;"><span><u>A</u>dd</span></div>
<div class="btn" style="left:63px;top:439px;width:46px;height:14px;line-height:14.6px;"><span>Ed<u>i</u>t</span></div>
<div class="btn dis" style="left:112px;top:439px;width:57px;height:14px;line-height:14.6px;"><span>Cancel <u>S</u>ervice</span></div>
<div class="btn" style="left:173px;top:439px;width:57px;height:14px;line-height:14.6px;"><span>Order <u>D</u>etails</span></div>
<div class="btn" style="left:233px;top:439px;width:56px;height:14px;line-height:14.6px;"><span><u>E</u>nter Actuals</span></div>
<div class="btn" style="left:294px;top:439px;width:57px;height:14px;line-height:14.6px;"><span>Day Note &gt;&gt;</span></div>
<div class="btn" style="left:366px;top:439px;width:74px;height:14px;line-height:14.6px;"><span>Assign E<u>q</u>uipment</span></div>
<div class="btn" style="left:446px;top:439px;width:75px;height:14px;line-height:14.6px;"><span>Remove Equipment</span></div></body></html>
